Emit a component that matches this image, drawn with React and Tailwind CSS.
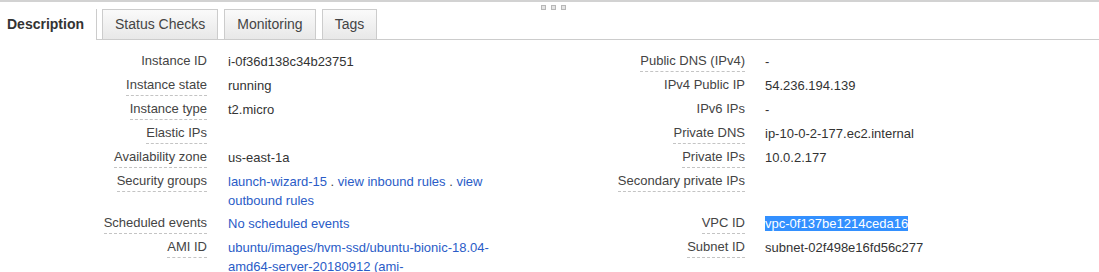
import React from 'react';

const rows = [
  {
    left: { label: 'Instance ID', value: 'i-0f36d138c34b23751', dashed: false },
    right: { label: 'Public DNS (IPv4)', value: '-', dashed: true },
  },
  {
    left: { label: 'Instance state', value: 'running', dashed: true },
    right: { label: 'IPv4 Public IP', value: '54.236.194.139', dashed: false },
  },
  {
    left: { label: 'Instance type', value: 't2.micro', dashed: true },
    right: { label: 'IPv6 IPs', value: '-', dashed: false },
  },
  {
    left: { label: 'Elastic IPs', value: '', dashed: true },
    right: { label: 'Private DNS', value: 'ip-10-0-2-177.ec2.internal', dashed: true },
  },
  {
    left: { label: 'Availability zone', value: 'us-east-1a', dashed: true },
    right: { label: 'Private IPs', value: '10.0.2.177', dashed: true },
  },
  {
    left: { label: 'Security groups', value: 'security', dashed: true },
    right: { label: 'Secondary private IPs', value: '', dashed: true },
  },
  {
    left: { label: 'Scheduled events', value: 'events', dashed: true },
    right: { label: 'VPC ID', value: 'vpc', dashed: true },
  },
  {
    left: { label: 'AMI ID', value: 'ami', dashed: true },
    right: { label: 'Subnet ID', value: 'subnet-02f498e16fd56c277', dashed: true },
  },
];

const Label = ({ text, dashed }) => (
  <span
    className={
      'leading-[18px] pb-[1px] text-[#444] ' +
      (dashed ? 'border-b border-dashed border-[#c4c4c4]' : 'border-b border-transparent')
    }
  >
    {text}
  </span>
);

const Link = ({ children }) => <a className="text-[#2a5cc7] cursor-pointer">{children}</a>;

const renderValue = (value) => {
  if (value === 'security') {
    return (
      <>
        <Link>launch-wizard-15</Link>
        <span className="text-[#444]"> . </span>
        <Link>view inbound rules</Link>
        <span className="text-[#444]"> . </span>
        <Link>view outbound rules</Link>
      </>
    );
  }
  if (value === 'events') return <Link>No scheduled events</Link>;
  if (value === 'ami') return <Link>ubuntu/images/hvm-ssd/ubuntu-bionic-18.04-amd64-server-20180912 (ami-0ac019f4fcb7cb7e6)</Link>;
  if (value === 'vpc') return <span className="bg-[#3390ff] text-white">vpc-0f137be1214ceda16</span>;
  return value;
};

const Tab = ({ children }) => (
  <div className="ml-[5px] first:ml-[5px] h-[30px] px-[12px] flex items-center border border-b-0 border-[#cccccc] bg-gradient-to-b from-[#fafafa] to-[#e8e8e8] text-[14px] text-[#444] mr-[1px]">
    {children}
  </div>
);

export default function App() {
  return (
    <div className="w-[1099px] h-[272px] overflow-hidden bg-white font-['Liberation_Sans',Arial,sans-serif]">
      <div className="relative flex h-[40px] items-end border-t-2 border-[#d2d2d2]">
        <div className="h-[31px] w-[97px] pl-[7px] flex items-center border-r border-[#cccccc] text-[14px] font-bold text-[#333]">
          Description
        </div>
        <div className="flex flex-1 items-end border-b border-[#cccccc]">
          <Tab>Status Checks</Tab>
          <Tab>Monitoring</Tab>
          <Tab>Tags</Tab>
        </div>
        <div className="absolute left-[541px] top-[3px] flex gap-[5px]">
          {[0, 1, 2].map((i) => (
            <div key={i} className="w-[5px] h-[5px] border border-[#b8b8b8] bg-[#e4e4e4]" />
          ))}
        </div>
      </div>

      <div className="pt-[10px] grid grid-cols-[207px_322px_216px_1fr] text-[13px]">
        {rows.map((row, i) => (
          <React.Fragment key={i}>
            <div className="py-[2px] flex justify-end items-start">
              <Label text={row.left.label} dashed={row.left.dashed} />
            </div>
            <div className="py-[2px] pl-[21px] pr-[20px] leading-[19px] text-[#333]">{renderValue(row.left.value)}</div>
            <div className="py-[2px] flex justify-end items-start">
              <Label text={row.right.label} dashed={row.right.dashed} />
            </div>
            <div className="py-[2px] pl-[20px] leading-[19px] text-[#333]">{renderValue(row.right.value)}</div>
          </React.Fragment>
        ))}
      </div>
    </div>
  );
}
